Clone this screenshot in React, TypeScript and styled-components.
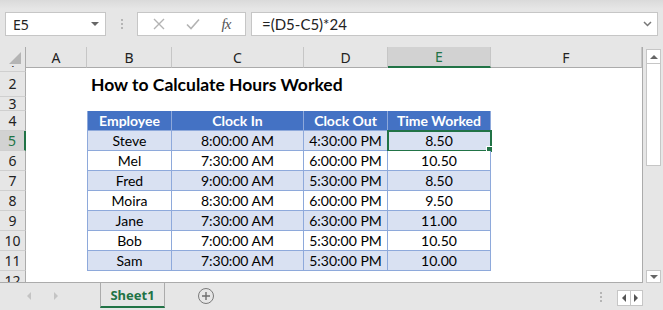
import React from 'react';
import styled, { createGlobalStyle } from 'styled-components';

const GlobalStyle = createGlobalStyle`
    html, body {
        margin: 0;
        padding: 0;
        background: #ffffff;
        overflow: hidden;
    }
    * {
        box-sizing: border-box;
    }
`;

const COLS = '26px 61px 85px 132px 84px 103px 1fr';
const UI_FONT = `'Noto Sans', 'Open Sans', sans-serif`;
const CELL_FONT = `Lato, 'Noto Sans', sans-serif`;
const GREEN = '#217346';

const Window = styled.div`
    width: 663px;
    height: 310px;
    display: flex;
    flex-direction: column;
    background: #e6e6e6;
    font-family: ${UI_FONT};
    overflow: hidden;
`;

const TopBar = styled.div`
    height: 47px;
    display: flex;
    align-items: flex-start;
    padding: 12px 5px 0 5px;
    background: linear-gradient(#dadada, #e6e6e6 9px);
`;

const NameBox = styled.div`
    width: 101px;
    height: 24px;
    background: #fff;
    border: 1px solid #c6c6c6;
    display: flex;
    align-items: center;
    justify-content: space-between;
    padding: 0 6px 0 7px;
    font-size: 14px;
    color: #222;
`;

const Caret = styled.span`
    width: 0;
    height: 0;
    border-left: 4px solid transparent;
    border-right: 4px solid transparent;
    border-top: 4px solid #666;
`;

const Grip = styled.div`
    width: 31px;
    height: 24px;
    display: flex;
    align-items: center;
    justify-content: center;
`;

const GripDots = styled.span`
    width: 2px;
    height: 11px;
    background: repeating-linear-gradient(#b5b5b5 0 2px, transparent 2px 4px);
`;

const ButtonGroup = styled.div`
    width: 109px;
    height: 24px;
    background: #fff;
    border: 1px solid #c6c6c6;
    display: flex;
    align-items: center;
    justify-content: space-around;
    padding: 0 4px;
`;

const Fx = styled.span`
    font-family: 'Liberation Serif', serif;
    font-style: italic;
    font-size: 15px;
    color: #555;
    letter-spacing: -1px;
`;

const FormulaInput = styled.div`
    flex: 1;
    margin-left: 5px;
    height: 24px;
    background: #fff;
    border: 1px solid #c6c6c6;
    display: flex;
    align-items: center;
    justify-content: space-between;
    padding: 0 5px 0 10px;
    font-family: ${CELL_FONT};
    font-size: 15px;
    color: #222;
`;

const Main = styled.div`
    display: flex;
    height: 236px;
`;

const Sheet = styled.div`
    width: 643px;
    background: #fff;
    border-right: 1px solid #ababab;
    border-bottom: 1px solid #ababab;
    display: flex;
    flex-direction: column;
    overflow: hidden;
`;

const Row = styled.div<{ $h: number }>`
    display: grid;
    grid-template-columns: ${COLS};
    height: ${(p) => p.$h}px;
    flex: none;
`;

const ColHead = styled.div<{ $active?: boolean }>`
    display: flex;
    align-items: center;
    justify-content: center;
    background: ${(p) => (p.$active ? '#d2d2d2' : '#e6e6e6')};
    color: ${(p) => (p.$active ? GREEN : '#222')};
    border-right: 1px solid #c6c6c6;
    border-bottom: ${(p) => (p.$active ? `2px solid ${GREEN}` : '1px solid #ababab')};
    font-size: 14px;
`;

const Corner = styled.div`
    background: #e6e6e6;
    border-right: 1px solid #ababab;
    border-bottom: 1px solid #ababab;
    display: flex;
    align-items: flex-end;
    justify-content: flex-end;
    padding: 0 4px 3px 0;
`;

const RowHead = styled.div<{ $active?: boolean; $clip?: 'top' | 'bottom' }>`
    display: flex;
    align-items: ${(p) =>
        p.$clip === 'top' ? 'flex-end' : p.$clip === 'bottom' ? 'flex-start' : 'center'};
    justify-content: center;
    background: ${(p) => (p.$active ? '#d2d2d2' : '#e6e6e6')};
    color: ${(p) => (p.$active ? GREEN : '#222')};
    border-right: ${(p) => (p.$active ? `2px solid ${GREEN}` : '1px solid #ababab')};
    border-bottom: 1px solid #cfcfcf;
    font-size: 14px;
    line-height: 18px;
    overflow: hidden;
    padding-top: ${(p) => (p.$clip === 'bottom' ? '1px' : '0')};
`;

const Empty = styled.div``;

const Title = styled.div`
    display: flex;
    align-items: center;
    padding-left: 4px;
    white-space: nowrap;
    font-family: ${CELL_FONT};
    font-weight: 700;
    font-size: 17.5px;
    color: #000;
`;

const Cell = styled.div<{ $head?: boolean; $band?: boolean; $first?: boolean; $selected?: boolean }>`
    position: relative;
    display: flex;
    align-items: center;
    justify-content: center;
    font-family: ${CELL_FONT};
    font-size: 14px;
    font-weight: ${(p) => (p.$head ? 700 : 400)};
    color: ${(p) => (p.$head ? '#fff' : '#000')};
    background: ${(p) => (p.$head ? '#4472c4' : p.$band ? '#d9e1f2' : '#fff')};
    border-right: 1px solid #8ea9db;
    border-bottom: 1px solid #8ea9db;
    border-left: ${(p) => (p.$first ? '1px solid #8ea9db' : 'none')};
    outline: ${(p) => (p.$selected ? `2px solid ${GREEN}` : 'none')};
    outline-offset: -1px;

    &::after {
        content: '';
        display: ${(p) => (p.$selected ? 'block' : 'none')};
        position: absolute;
        right: -3px;
        bottom: -3px;
        width: 5px;
        height: 5px;
        background: ${GREEN};
        border: 1px solid #fff;
    }
`;

const VScroll = styled.div`
    width: 20px;
    display: flex;
    flex-direction: column;
    padding: 2px 2px 0 3px;
    background: #e6e6e6;
`;

const ScrollBtn = styled.div<{ $h: number }>`
    height: ${(p) => p.$h}px;
    background: #fff;
    border: 1px solid #c6c6c6;
    display: flex;
    align-items: center;
    justify-content: center;
    flex: none;
`;

const Thumb = styled.div`
    height: 102px;
    background: #fff;
    border: 1px solid #c6c6c6;
    border-top: none;
    flex: none;
`;

const Track = styled.div`
    flex: 1;
`;

const Tri = styled.span<{ $dir: 'up' | 'down' | 'left' | 'right'; $c?: string; $s?: number }>`
    width: 0;
    height: 0;
    ${(p) => {
        const s = p.$s ?? 4;
        const c = p.$c ?? '#666';
        switch (p.$dir) {
            case 'up':
                return `border-left:${s}px solid transparent;border-right:${s}px solid transparent;border-bottom:${s}px solid ${c};`;
            case 'down':
                return `border-left:${s}px solid transparent;border-right:${s}px solid transparent;border-top:${s}px solid ${c};`;
            case 'left':
                return `border-top:${s}px solid transparent;border-bottom:${s}px solid transparent;border-right:${s}px solid ${c};`;
            default:
                return `border-top:${s}px solid transparent;border-bottom:${s}px solid transparent;border-left:${s}px solid ${c};`;
        }
    }}
`;

const BottomBar = styled.div`
    height: 27px;
    display: flex;
    align-items: flex-start;
`;

const NavArrows = styled.div`
    width: 100px;
    height: 25px;
    display: flex;
    align-items: center;
    padding-left: 27px;
    gap: 23px;
`;

const Tab = styled.div`
    width: 65px;
    height: 25px;
    border-left: 1px solid #ababab;
    border-right: 1px solid #ababab;
    border-bottom: 2px solid ${GREEN};
    display: flex;
    align-items: center;
    justify-content: center;
    font-size: 13px;
    font-weight: 700;
    color: ${GREEN};
`;

const AddSheet = styled.div`
    width: 16px;
    height: 16px;
    margin: 5px 0 0 33px;
    border: 1px solid #7a7a7a;
    border-radius: 50%;
    display: flex;
    align-items: center;
    justify-content: center;
`;

const Spacer = styled.div`
    flex: 1;
`;

const BottomGrip = styled.span`
    width: 2px;
    height: 11px;
    margin: 9px 15px 0 0;
    background: repeating-linear-gradient(#b5b5b5 0 2px, transparent 2px 4px);
`;

const HScrollBtns = styled.div`
    width: 26px;
    height: 16px;
    margin: 7px 20px 0 0;
    display: flex;
    background: #fff;
    border: 1px solid #c6c6c6;
`;

const HBtn = styled.div<{ $sep?: boolean }>`
    flex: 1;
    display: flex;
    align-items: center;
    justify-content: center;
    border-right: ${(p) => (p.$sep ? '1px solid #c6c6c6' : 'none')};
`;

const rows = [
    ['Steve', '8:00:00 AM', '4:30:00 PM', '8.50'],
    ['Mel', '7:30:00 AM', '6:00:00 PM', '10.50'],
    ['Fred', '9:00:00 AM', '5:30:00 PM', '8.50'],
    ['Moira', '8:30:00 AM', '6:00:00 PM', '9.50'],
    ['Jane', '7:30:00 AM', '6:30:00 PM', '11.00'],
    ['Bob', '7:00:00 AM', '5:30:00 PM', '10.50'],
    ['Sam', '7:30:00 AM', '5:30:00 PM', '10.00'],
];

const headers = ['Employee', 'Clock In', 'Clock Out', 'Time Worked'];

const App: React.FC = () => {
    return (
        <Window>
            <GlobalStyle />
            <TopBar>
                <NameBox>
                    E5
                    <Caret />
                </NameBox>
                <Grip>
                    <GripDots />
                </Grip>
                <ButtonGroup>
                    <svg width="12" height="12" viewBox="0 0 12 12">
                        <path d="M1 1L11 11M11 1L1 11" stroke="#b3b3b3" strokeWidth="1.4" />
                    </svg>
                    <svg width="14" height="12" viewBox="0 0 14 12">
                        <path d="M1 6.5L5 10.5L13 1.5" stroke="#b3b3b3" strokeWidth="1.6" fill="none" />
                    </svg>
                    <Fx>fx</Fx>
                </ButtonGroup>
                <FormulaInput>
                    =(D5-C5)*24
                    <svg width="9" height="6" viewBox="0 0 9 6">
                        <path d="M1 1L4.5 4.5L8 1" stroke="#777" strokeWidth="1.5" fill="none" />
                    </svg>
                </FormulaInput>
            </TopBar>
            <Main>
                <Sheet>
                    <Row $h={19}>
                        <Corner>
                            <svg width="12" height="12" viewBox="0 0 12 12">
                                <path d="M12 0L12 12L0 12Z" fill="#b4b4b4" />
                            </svg>
                        </Corner>
                        <ColHead>A</ColHead>
                        <ColHead>B</ColHead>
                        <ColHead>C</ColHead>
                        <ColHead>D</ColHead>
                        <ColHead $active>E</ColHead>
                        <ColHead>F</ColHead>
                    </Row>
                    <Row $h={6}>
                        <RowHead $clip="top">1</RowHead>
                    </Row>
                    <Row $h={25}>
                        <RowHead>2</RowHead>
                        <Empty />
                        <Title>How to Calculate Hours Worked</Title>
                    </Row>
                    <Row $h={14}>
                        <RowHead>3</RowHead>
                    </Row>
                    <Row $h={20}>
                        <RowHead>4</RowHead>
                        <Empty />
                        {headers.map((h, i) => (
                            <Cell key={h} $head $first={i === 0}>
                                {h}
                            </Cell>
                        ))}
                    </Row>
                    {rows.map((r, ri) => (
                        <Row $h={20} key={r[0]}>
                            <RowHead $active={ri === 0}>{ri + 5}</RowHead>
                            <Empty />
                            {r.map((v, ci) => (
                                <Cell
                                    key={ci}
                                    $band={ri % 2 === 0}
                                    $first={ci === 0}
                                    $selected={ri === 0 && ci === 3}
                                >
                                    {v}
                                </Cell>
                            ))}
                        </Row>
                    ))}
                    <Row $h={12}>
                        <RowHead $clip="bottom">12</RowHead>
                    </Row>
                </Sheet>
                <VScroll>
                    <ScrollBtn $h={15}>
                        <Tri $dir="up" $s={4} />
                    </ScrollBtn>
                    <Thumb />
                    <Track />
                    <ScrollBtn $h={13}>
                        <Tri $dir="down" $s={4} />
                    </ScrollBtn>
                </VScroll>
            </Main>
            <BottomBar>
                <NavArrows>
                    <Tri $dir="left" $c="#c4c4c4" $s={4} />
                    <Tri $dir="right" $c="#c4c4c4" $s={4} />
                </NavArrows>
                <Tab>Sheet1</Tab>
                <AddSheet>
                    <svg width="10" height="10" viewBox="0 0 10 10">
                        <path d="M5 1V9M1 5H9" stroke="#6e6e6e" strokeWidth="1.4" />
                    </svg>
                </AddSheet>
                <Spacer />
                <BottomGrip />
                <HScrollBtns>
                    <HBtn $sep>
                        <Tri $dir="left" $c="#555" $s={4} />
                    </HBtn>
                    <HBtn>
                        <Tri $dir="right" $c="#555" $s={4} />
                    </HBtn>
                </HScrollBtns>
            </BottomBar>
        </Window>
    );
};

export default App;
